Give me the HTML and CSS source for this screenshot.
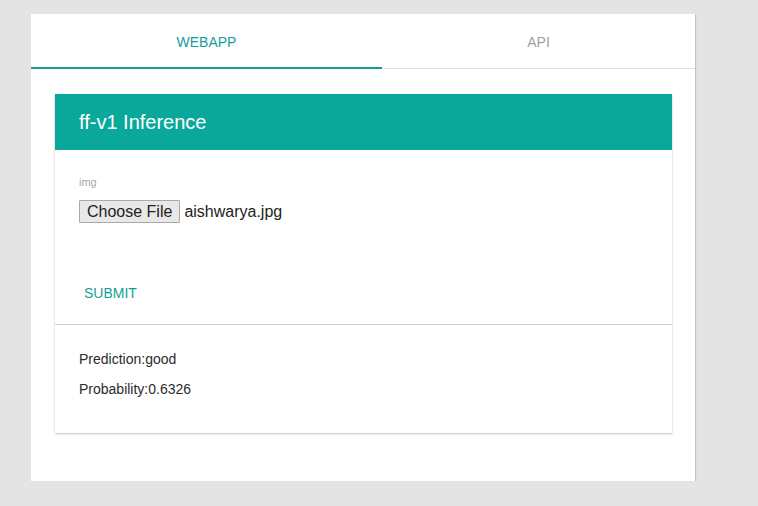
FILE: index.html
```html
<!DOCTYPE html>
<html>
<head>
<meta charset="utf-8">
<link rel="stylesheet" href="styles.css">
</head>
<body>
<div class="page">
  <div class="panel">
    <div class="tabs">
      <div class="tab active">WEBAPP</div>
      <div class="tab">API</div>
    </div>
    <div class="content">
      <div class="card">
        <div class="card-header">ff-v1 Inference</div>
        <div class="card-body">
          <div class="label">img</div>
          <div class="file-row">
            <button class="file-btn" type="button">Choose File</button>
            <span class="file-name">aishwarya.jpg</span>
          </div>
          <div class="submit">SUBMIT</div>
        </div>
        <div class="card-result">
          <div class="result-line">Prediction:good</div>
          <div class="result-line">Probability:0.6326</div>
        </div>
      </div>
    </div>
  </div>
</div>
</body>
</html>
```
FILE: styles.css
```css
html, body {
  margin: 0;
  padding: 0;
  background: #e4e4e4;
  font-family: "Liberation Sans", Arial, sans-serif;
}
.page {
  padding: 14px 0 0 31px;
}
.panel {
  width: 664px;
  height: 467px;
  background: #fff;
  box-shadow: 1px 1px 1px rgba(0,0,0,0.15);
  box-sizing: border-box;
}
.tabs {
  display: flex;
  height: 55px;
  border-bottom: 1px solid #e0e0e0;
  box-sizing: border-box;
}
.tab {
  flex: 1;
  display: flex;
  align-items: center;
  justify-content: center;
  font-size: 14px;
  color: #9e9e9e;
  padding-top: 2px;
  box-sizing: border-box;
}
.tab.active {
  flex: 0 0 351px;
  color: #139e95;
  border-bottom: 2px solid #139e95;
  margin-bottom: -1px;
}
.content {
  padding: 25px 23px 0 24px;
}
.card {
  background: #fff;
  box-shadow: 0 1px 2px rgba(0,0,0,0.25);
}
.card-header {
  height: 56px;
  background: #0aa89b;
  color: #fff;
  font-size: 20px;
  display: flex;
  align-items: center;
  padding-left: 24px;
  box-sizing: border-box;
}
.card-body {
  padding: 26px 24px 0 24px;
  height: 175px;
  box-sizing: border-box;
  border-bottom: 1px solid #d0d0d0;
}
.label {
  font-size: 11px;
  color: #a8a8a8;
  line-height: 13px;
}
.file-row {
  display: flex;
  align-items: center;
  margin-top: 11px;
}
.file-btn {
  font-family: "Liberation Sans", Arial, sans-serif;
  font-size: 16px;
  color: #222;
  background: #e8e8e8;
  border: 1px solid #a9a9a9;
  border-radius: 1px;
  height: 23px;
  padding: 0 7px;
  margin: 0;
  line-height: 20px;
}
.file-name {
  font-size: 16px;
  color: #222;
  margin-left: 4px;
}
.submit {
  margin-top: 62px;
  margin-left: 5px;
  font-size: 14px;
  color: #139e95;
  line-height: 16px;
}
.card-result {
  padding: 26px 24px 0 24px;
  height: 108px;
  box-sizing: border-box;
}
.result-line {
  font-size: 14px;
  color: #2b2b2b;
  line-height: 16px;
  margin-bottom: 14px;
}
```
